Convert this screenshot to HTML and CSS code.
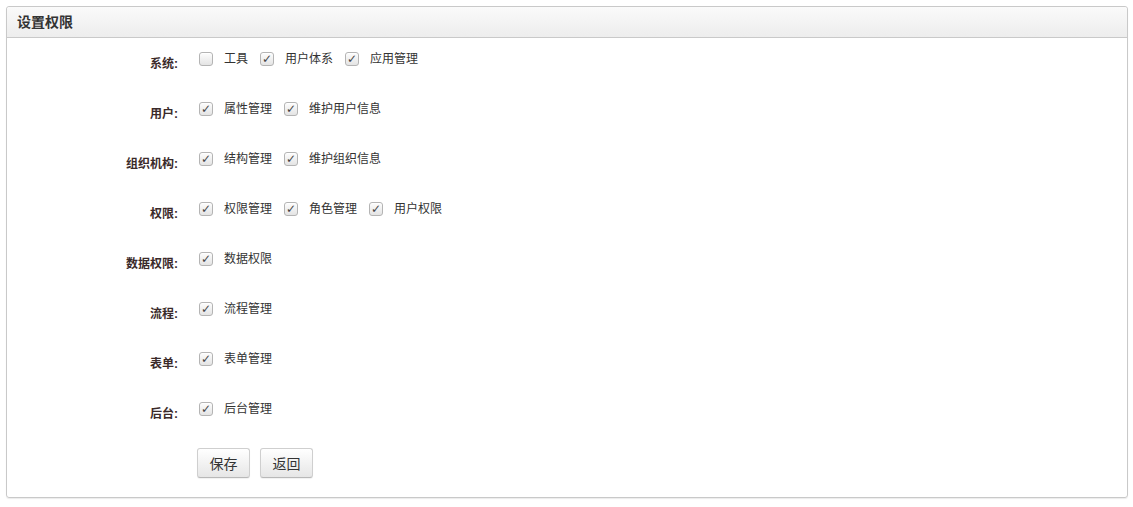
FILE: index.html
```html
<!DOCTYPE html>
<html>
	<head>
		<meta charset="utf-8" />
		<title>设置权限</title>
		<link rel="stylesheet" href="styles.css">
	</head>
	<body>
		<div class="panel">
			<div class="panel-head">设置权限</div>
			<form class="panel-body">
				<div class="row">
					<span class="row-label">系统:</span>
					<div class="opts">
						<label class="opt"><input type="checkbox">工具</label>
						<label class="opt"><input type="checkbox" checked>用户体系</label>
						<label class="opt"><input type="checkbox" checked>应用管理</label>
					</div>
				</div>
				<div class="row">
					<span class="row-label">用户:</span>
					<div class="opts">
						<label class="opt"><input type="checkbox" checked>属性管理</label>
						<label class="opt"><input type="checkbox" checked>维护用户信息</label>
					</div>
				</div>
				<div class="row">
					<span class="row-label">组织机构:</span>
					<div class="opts">
						<label class="opt"><input type="checkbox" checked>结构管理</label>
						<label class="opt"><input type="checkbox" checked>维护组织信息</label>
					</div>
				</div>
				<div class="row">
					<span class="row-label">权限:</span>
					<div class="opts">
						<label class="opt"><input type="checkbox" checked>权限管理</label>
						<label class="opt"><input type="checkbox" checked>角色管理</label>
						<label class="opt"><input type="checkbox" checked>用户权限</label>
					</div>
				</div>
				<div class="row">
					<span class="row-label">数据权限:</span>
					<div class="opts">
						<label class="opt"><input type="checkbox" checked>数据权限</label>
					</div>
				</div>
				<div class="row">
					<span class="row-label">流程:</span>
					<div class="opts">
						<label class="opt"><input type="checkbox" checked>流程管理</label>
					</div>
				</div>
				<div class="row">
					<span class="row-label">表单:</span>
					<div class="opts">
						<label class="opt"><input type="checkbox" checked>表单管理</label>
					</div>
				</div>
				<div class="row">
					<span class="row-label">后台:</span>
					<div class="opts">
						<label class="opt"><input type="checkbox" checked>后台管理</label>
					</div>
				</div>
				<!--按钮-->
				<div class="actions">
					<button type="button" class="btn">保存</button>
					<button type="button" class="btn">返回</button>
				</div>
			</form>
		</div>
	</body>
</html>
```
FILE: styles.css
```css
* {
	margin: 0;
	padding: 0;
	box-sizing: border-box;
}

body {
	padding: 6px 5px 8px 6px;
	font-family: "Liberation Sans", "Noto Sans CJK SC", sans-serif;
	font-size: 12px;
	color: #333;
	background: #fff;
}

.panel {
	border: 1px solid #c9c9c9;
	border-radius: 3px;
	box-shadow: 0 1px 1px rgba(0, 0, 0, .08);
}

.panel-head {
	height: 31px;
	line-height: 30px;
	padding-left: 10px;
	font-size: 14px;
	font-weight: bold;
	color: #333;
	background: linear-gradient(#fafafa, #ededed);
	border-bottom: 1px solid #c9c9c9;
	border-radius: 3px 3px 0 0;
}

.panel-body {
	padding: 9px 0 19px;
}

.row {
	display: flex;
	align-items: flex-start;
	height: 24px;
	margin-bottom: 26px;
}

.row-label {
	width: 171px;
	padding-top: 5px;
	line-height: 24px;
	text-align: right;
	font-weight: bold;
	color: #3a2a2a;
}

.opts {
	display: flex;
	gap: 12px;
	margin-left: 21px;
}

.opt {
	display: flex;
	align-items: center;
	height: 24px;
	line-height: 24px;
	color: #333;
}

.opt input {
	appearance: none;
	-webkit-appearance: none;
	position: relative;
	width: 14px;
	height: 14px;
	margin-right: 11px;
	border: 1px solid #b4b4b4;
	border-radius: 3px;
	background: linear-gradient(#fdfdfd, #e4e4e4);
	box-shadow: inset 0 1px 0 #fff;
}

.opt input:checked::after {
	content: "\2713";
	position: absolute;
	left: 1px;
	top: -1px;
	font-family: "DejaVu Sans", sans-serif;
	font-size: 12px;
	font-weight: bold;
	line-height: 14px;
	color: #444;
}

.actions {
	display: flex;
	gap: 10px;
	margin-left: 190px;
	padding-top: 1px;
}

.btn {
	width: 53px;
	height: 30px;
	font-family: "Liberation Sans", "Noto Sans CJK SC", sans-serif;
	font-size: 14px;
	color: #333;
	border: 1px solid #cfcfcf;
	border-bottom-color: #b8b8b8;
	border-radius: 3px;
	background: linear-gradient(#ffffff, #e6e6e6);
	box-shadow: 0 1px 1px rgba(0, 0, 0, .06);
	cursor: pointer;
}
```
